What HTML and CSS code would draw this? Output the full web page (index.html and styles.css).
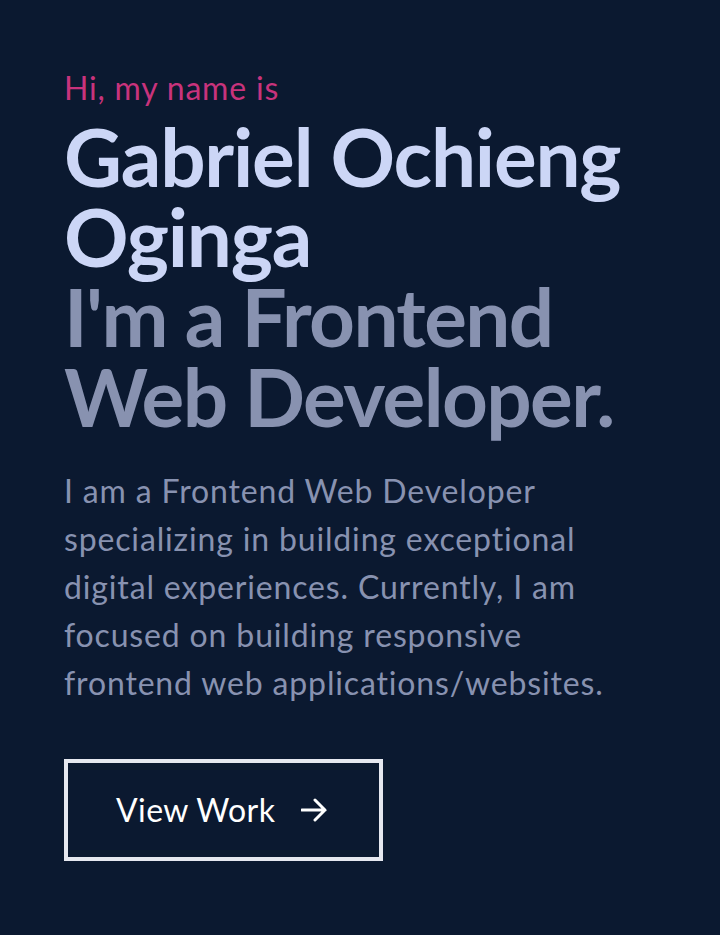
FILE: index.html
```html
<!DOCTYPE html>
<html lang="en">
<head>
<meta charset="utf-8">
<title>Gabriel Ochieng Oginga</title>
<link rel="stylesheet" href="styles.css">
</head>
<body>
<main class="hero">
  <p class="hi">Hi, my name is</p>
  <h1 class="name">Gabriel Ochieng Oginga</h1>
  <h2 class="role">I'm a Frontend Web Developer.</h2>
  <p class="intro">I am a Frontend Web Developer specializing in building exceptional digital experiences. Currently, I am focused on building responsive frontend web applications/websites.</p>
  <a class="btn" href="#work">
    <span>View Work</span>
    <svg class="arrow" viewBox="0 0 26 24" width="26" height="24" aria-hidden="true">
      <path d="M1 12H24M14 2L24 12L14 22" fill="none" stroke="#ffffff" stroke-width="3" stroke-linecap="round" stroke-linejoin="miter"/>
    </svg>
  </a>
</main>
</body>
</html>
```
FILE: styles.css
```css
html, body {
  margin: 0;
  padding: 0;
  background: #0b1930;
}
body {
  font-family: "Lato", "Open Sans", sans-serif;
  min-height: 935px;
}
.hero {
  padding: 65px 64px 0;
  display: flex;
  flex-direction: column;
  align-items: flex-start;
}
.hi {
  margin: 0;
  color: #c8337c;
  font-size: 32px;
  line-height: 46px;
  font-weight: 400;
  letter-spacing: 0.8px;
}
.name, .role {
  margin: 0;
  font-size: 80px;
  line-height: 80px;
  font-weight: 700;
}
.name {
  color: #ccd6f6;
  letter-spacing: -1.2px;
  margin-top: 5px;
}
.role {
  color: #8892b0;
  letter-spacing: -1.6px;
}
.intro {
  margin: 31px 0 0;
  color: #8892b0;
  font-size: 32px;
  line-height: 48px;
  font-weight: 400;
  letter-spacing: 0.85px;
  max-width: 580px;
}
.btn {
  margin-top: 52px;
  display: flex;
  align-items: center;
  gap: 26px;
  padding: 23px 52px 23px 48px;
  border: 4px solid #e6e8f0;
  color: #ffffff;
  text-decoration: none;
  font-size: 32px;
  line-height: 48px;
  letter-spacing: 0.4px;
}
.arrow { display: block; }
```
